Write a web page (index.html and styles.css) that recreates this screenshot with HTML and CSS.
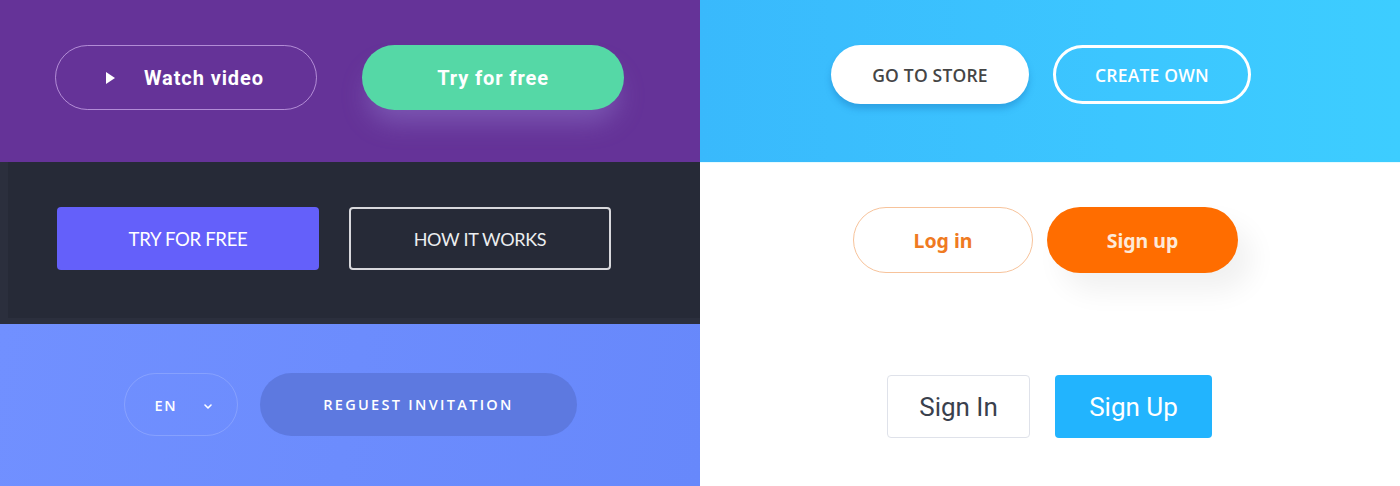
FILE: index.html
```html
<!DOCTYPE html>
<html lang="en">
<head>
<meta charset="utf-8">
<title>Buttons</title>
<link rel="stylesheet" href="styles.css">
</head>
<body>
<main class="grid">
  <section class="panel p-purple">
    <a class="btn btn-watch"><svg class="play" width="9" height="12" viewBox="0 0 9 12"><path d="M0 0 L9 6 L0 12 Z" fill="#fff"/></svg><span>Watch video</span></a>
    <a class="btn btn-try">Try for free</a>
  </section>
  <section class="panel p-sky">
    <a class="btn btn-store">GO TO STORE</a>
    <a class="btn btn-create">CREATE OWN</a>
  </section>
  <section class="panel p-dark">
    <div class="dark-inner">
      <a class="btn btn-tryfree">TRY FOR FREE</a>
      <a class="btn btn-how">HOW IT WORKS</a>
    </div>
  </section>
  <section class="panel p-white">
    <a class="btn btn-login">Log in</a>
    <a class="btn btn-signup">Sign up</a>
  </section>
  <section class="panel p-blue">
    <a class="btn btn-lang"><span>EN</span><svg class="chev" width="8" height="5" viewBox="0 0 8 5"><path d="M1 1 L4 4 L7 1" fill="none" stroke="#fff" stroke-width="1.6" stroke-linecap="round" stroke-linejoin="round"/></svg></a>
    <a class="btn btn-invite">REGUEST INVITATION</a>
  </section>
  <section class="panel p-plain">
    <a class="btn btn-signin">Sign In</a>
    <a class="btn btn-signup2">Sign Up</a>
  </section>
</main>
</body>
</html>
```
FILE: styles.css
```css
* { box-sizing: border-box; }
html, body { margin: 0; padding: 0; }
body { width: 1400px; height: 486px; overflow: hidden; background: #fff; }
.grid {
  display: grid;
  grid-template-columns: 700px 700px;
  grid-template-rows: 162px 162px 162px;
}
.panel {
  display: flex;
  align-items: flex-start;
}
.btn {
  display: flex;
  align-items: center;
  justify-content: center;
  text-decoration: none;
  white-space: nowrap;
}

/* Panel 1 */
.p-purple { background: #653398; padding: 45px 0 0 55px; gap: 45px; }
.btn-watch, .btn-try {
  width: 262px; height: 65px; border-radius: 33px;
  font-family: Roboto, "Liberation Sans", sans-serif; font-weight: 700; font-size: 20px; letter-spacing: 0.9px; color: #fff;
}
.btn-watch { border: 1.5px solid rgba(230, 200, 255, 0.6); justify-content: flex-start; padding-left: 50px; }
.btn-watch .play { margin-right: 29px; margin-top: 1px; }
.btn-try { background: #55d8a6; box-shadow: 0 18px 26px -6px rgba(150, 130, 210, 0.45); }

/* Panel 2 */
.p-sky { background: linear-gradient(90deg, #39b9fc 0%, #3cc6ff 60%, #3dcdff 100%); padding: 45px 0 0 131px; gap: 24px; }
.btn-store, .btn-create {
  width: 198px; height: 59px; border-radius: 30px;
  font-family: "Open Sans", "Liberation Sans", sans-serif; font-weight: 600; font-size: 17.5px; letter-spacing: 0.2px;
}
.btn-store { background: #fff; color: #454545; box-shadow: 0 5px 6px rgba(20, 110, 180, 0.35); }
.btn-create { border: 3px solid #fff; color: #fff; }

/* Panel 3 */
.p-dark { background: #2b2f3d; padding: 0 0 6px 8px; }
.dark-inner {
  flex: 1; height: 156px; background: #262a37;
  display: flex; align-items: flex-start; padding: 45px 0 0 49px; gap: 30px;
}
.btn-tryfree, .btn-how {
  width: 262px; height: 63px; border-radius: 4px;
  font-family: Lato, "Liberation Sans", sans-serif; font-weight: 400; font-size: 18px; letter-spacing: -0.3px;
}
.btn-tryfree { background: #6460fa; color: #fff; font-size: 18.5px; }
.btn-how { border: 2px solid #d8d8dc; color: #eceef0; width: 262px; }

/* Panel 4 */
.p-white { background: #fff; border-top: 1px solid #e6fbff; padding: 44px 0 0 153px; gap: 14px; }
.btn-login, .btn-signup {
  height: 66px; border-radius: 33px;
  font-family: "Noto Sans", "Open Sans", sans-serif; font-weight: 700; font-size: 19.5px;
}
.btn-login { width: 180px; border: 1.5px solid #f7c39b; color: #ef7a22; }
.btn-signup { width: 191px; background: #ff6d00; color: #fde9d9; box-shadow: 14px 18px 28px rgba(0, 0, 0, 0.06); }

/* Panel 5 */
.p-blue { background: linear-gradient(100deg, #7190ff 0%, #6c8cfd 50%, #6788fb 100%); padding: 49px 0 0 124px; gap: 22px; }
.btn-lang, .btn-invite {
  height: 63px; border-radius: 32px;
  font-family: "Open Sans", "Liberation Sans", sans-serif; font-weight: 600; color: #fff;
}
.btn-lang { width: 114px; border: 1px solid rgba(255, 255, 255, 0.17); font-size: 14.5px; letter-spacing: 1.8px; gap: 26px; padding-top: 1px; padding-left: 4px; }
.btn-lang .chev { margin-top: 2px; }
.btn-invite { width: 317px; background: #5d79e0; font-size: 14.5px; letter-spacing: 2.3px; }

/* Panel 6 */
.p-plain { background: #fff; padding: 51px 0 0 187px; gap: 25px; }
.btn-signin, .btn-signup2 {
  height: 63px; border-radius: 4px;
  font-family: Roboto, "Liberation Sans", sans-serif; font-weight: 400; font-size: 26px;
}
.btn-signin { width: 143px; border: 1px solid #dfe2ea; color: #39404d; }
.btn-signup2 { width: 157px; background: #22b4fe; color: #fff; }
```
